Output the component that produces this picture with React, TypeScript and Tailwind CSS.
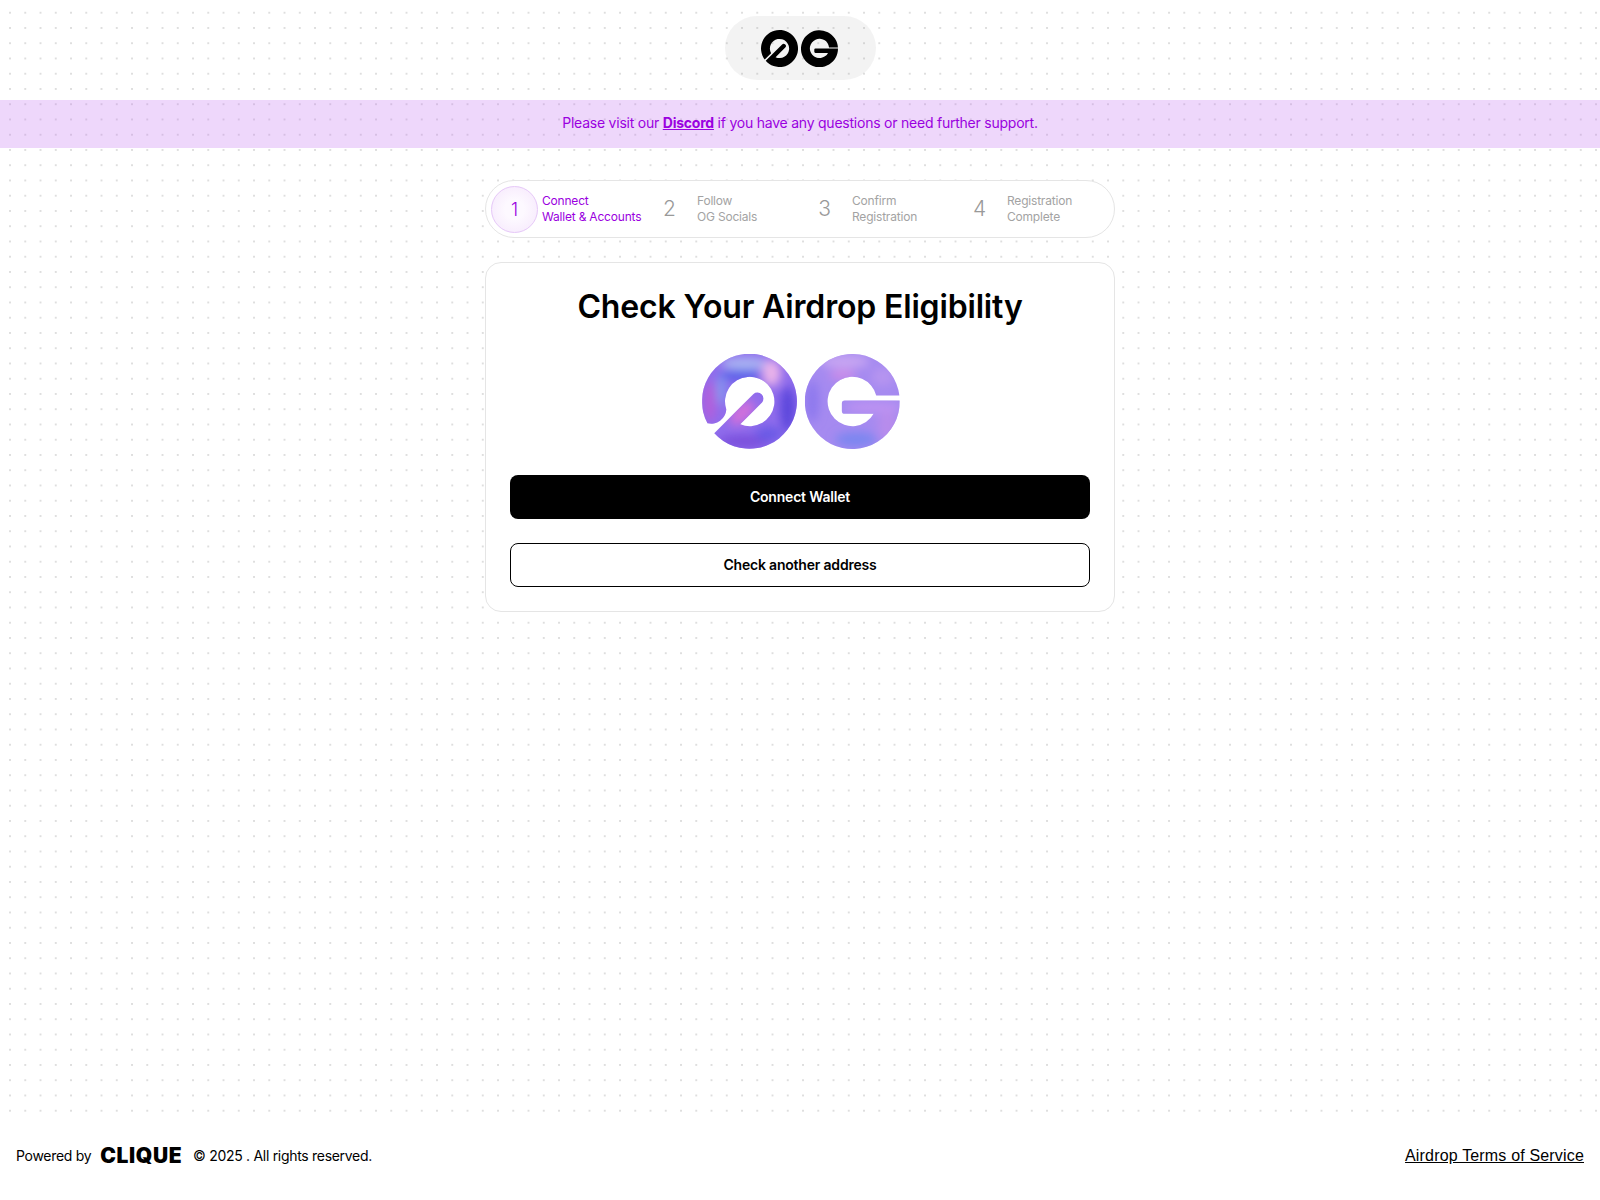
const STEPS = [
  { n: "1", top: "Connect", bottom: "Wallet & Accounts", active: true },
  { n: "2", top: "Follow", bottom: "OG Socials", active: false },
  { n: "3", top: "Confirm", bottom: "Registration", active: false },
  { n: "4", top: "Registration", bottom: "Complete", active: false },
];

// both glyphs are drawn in a 100x100 box
const BLACK_O =
  "M10 80A50 50 0 1 1 12.7 83.3L57 39A6 6 0 0 1 65.5 47.5L39.3 73.7A26 26 0 1 0 27.3 62.7Z";
const BLACK_G =
  "M99.9 47.4A50 50 0 1 0 100 50L39 50Q36 50 36 53L36 59Q36 62 39 62L73 62A26 26 0 1 1 75.9 47.4Z";
const COLOR_O =
  "M5.5 73A50 50 0 1 1 12.7 83.3L54 42A6.4 6.4 0 0 1 63 51L40 74A26 26 0 1 0 25.4 58.4A16 16 0 0 1 5.5 73Z";
const COLOR_G =
  "M99.6 43.6A50 50 0 1 0 100 49L42 49Q39 49 39 52L39 60Q39 63 42 63L72.5 63A26 26 0 1 1 75.2 43.6Z";

function OgMark() {
  return (
    <svg viewBox="0 0 208 100" className="h-[37px] w-[77px]">
      <path d={BLACK_O} fill="#000" />
      <path d={BLACK_G} fill="#000" transform="translate(108 0)" />
    </svg>
  );
}

function GradientMark() {
  return (
    <svg viewBox="0 0 208 100" className="h-[95px] w-[198px]">
      <defs>
        <filter id="soft" x="-50%" y="-50%" width="200%" height="200%">
          <feGaussianBlur stdDeviation="5" />
        </filter>
        <clipPath id="clipO">
          <path d={COLOR_O} />
        </clipPath>
        <clipPath id="clipG">
          <path d={COLOR_G} transform="translate(108 0)" />
        </clipPath>
      </defs>
      <g clipPath="url(#clipO)">
        <rect width="100" height="100" fill="#8f6cec" />
        <g filter="url(#soft)">
          <ellipse cx="45" cy="10" rx="26" ry="7" fill="#a9b2f2" />
          <ellipse cx="42" cy="22" rx="24" ry="5" fill="#4b5be8" />
          <ellipse cx="73" cy="20" rx="10" ry="14" fill="#e9b2ea" />
          <ellipse cx="90" cy="58" rx="8" ry="24" fill="#5c46dc" />
          <ellipse cx="8" cy="50" rx="7" ry="22" fill="#b25fdc" />
          <ellipse cx="20" cy="38" rx="4" ry="16" fill="#7fa0f0" />
          <ellipse cx="45" cy="92" rx="28" ry="7" fill="#7a50dc" />
          <ellipse cx="70" cy="84" rx="14" ry="8" fill="#6a5ae6" />
          <ellipse cx="42" cy="62" rx="16" ry="9" fill="#d070dc" transform="rotate(-45 42 62)" />
        </g>
      </g>
      <g clipPath="url(#clipG)">
        <rect x="108" width="100" height="100" fill="#a58af0" />
        <g filter="url(#soft)">
          <ellipse cx="150" cy="8" rx="26" ry="7" fill="#c8a6f2" />
          <ellipse cx="148" cy="22" rx="14" ry="5" fill="#cf8ce8" />
          <ellipse cx="116" cy="50" rx="7" ry="22" fill="#8d78ee" />
          <ellipse cx="162" cy="90" rx="22" ry="8" fill="#7c86f0" />
          <ellipse cx="195" cy="75" rx="10" ry="18" fill="#b88cec" />
          <ellipse cx="180" cy="56" rx="30" ry="6" fill="#bd93f2" />
          <ellipse cx="190" cy="24" rx="12" ry="10" fill="#b694f0" />
        </g>
      </g>
    </svg>
  );
}

export default function App() {
  return (
    <div className="flex min-h-[1200px] flex-col bg-white font-['Inter',sans-serif] text-black">
      <main className="flex h-[1112px] flex-col items-center bg-[radial-gradient(circle,#dedede_0.8px,transparent_1.1px)] bg-[length:15.25px_15.25px] bg-[position:2.4px_5.1px] pt-4">
        {/* Logo pill */}
        <div className="flex h-16 w-[151px] items-center justify-center rounded-[32px] bg-[#8f8f8f1c] pr-[2px]">
          <OgMark />
        </div>

        {/* Banner */}
        <div className="mt-5 flex h-12 w-full items-center justify-center bg-[#c477f04b] pb-[3px] text-[14px] tracking-[-0.23px] text-[#9a00e0]">
          <span>
            Please visit our <a className="font-bold underline">Discord</a> if you have any questions or need further support.
          </span>
        </div>

        {/* Stepper */}
        <div className="mt-8 flex h-[58px] w-[630px] items-center rounded-[29px] border border-[#e5e5e5] bg-white pl-[5px]">
          {STEPS.map((s) => (
            <div key={s.n} className="flex w-[155px] items-center">
              <div
                className={
                  s.active
                    ? "flex h-[47px] w-[47px] shrink-0 items-center justify-center rounded-full border border-[#e6c8f8] bg-[radial-gradient(circle,#fdf9ff_30%,#f5e6fc_100%)] text-[18px] font-light text-[#9a00e0]"
                    : "flex h-12 w-12 shrink-0 items-center justify-center pr-[1px] text-[21px] font-light text-[#999999]"
                }
              >
                {s.n}
              </div>
              <div
                className={
                  s.active
                    ? "ml-[4px] text-[12px] leading-4 tracking-[-0.2px] text-[#9a00e0]"
                    : "ml-[3px] text-[12px] leading-4 tracking-[-0.2px] text-[#a3a3a3]"
                }
              >
                <p>{s.top}</p>
                <p className="whitespace-nowrap">{s.bottom}</p>
              </div>
            </div>
          ))}
        </div>

        {/* Card */}
        <div className="mt-6 flex h-[350px] w-[630px] flex-col items-center rounded-2xl border border-[#e5e5e5] bg-white px-6 pt-6">
          <h1 className="text-[32px] leading-10 font-semibold tracking-[-0.17px]">Check Your Airdrop Eligibility</h1>
          <div className="mt-[27px] ml-[2px] h-[95px]">
            <GradientMark />
          </div>
          <button className="mt-[26px] h-11 w-full rounded-lg bg-black pb-[2px] text-[14px] font-semibold tracking-[-0.2px] text-white">
            Connect Wallet
          </button>
          <button className="mt-6 h-11 w-full rounded-lg border border-black bg-white pb-[2px] text-[14px] font-semibold tracking-[-0.2px]">
            Check another address
          </button>
        </div>
      </main>

      <footer className="flex h-[88px] items-start justify-between px-4 pt-[33px]">
        <div className="flex items-center text-[14px] tracking-[-0.3px]">
          <span>Powered by</span>
          <span className="mr-[11px] ml-[9px] text-[21px] leading-none font-black tracking-[0.6px]">CLIQUE</span>
          <span>© 2025 . All rights reserved.</span>
        </div>
        <a className="-mt-px font-['Liberation_Sans',sans-serif] text-[16px] tracking-[0.17px] underline">Airdrop Terms of Service</a>
      </footer>
    </div>
  );
}
